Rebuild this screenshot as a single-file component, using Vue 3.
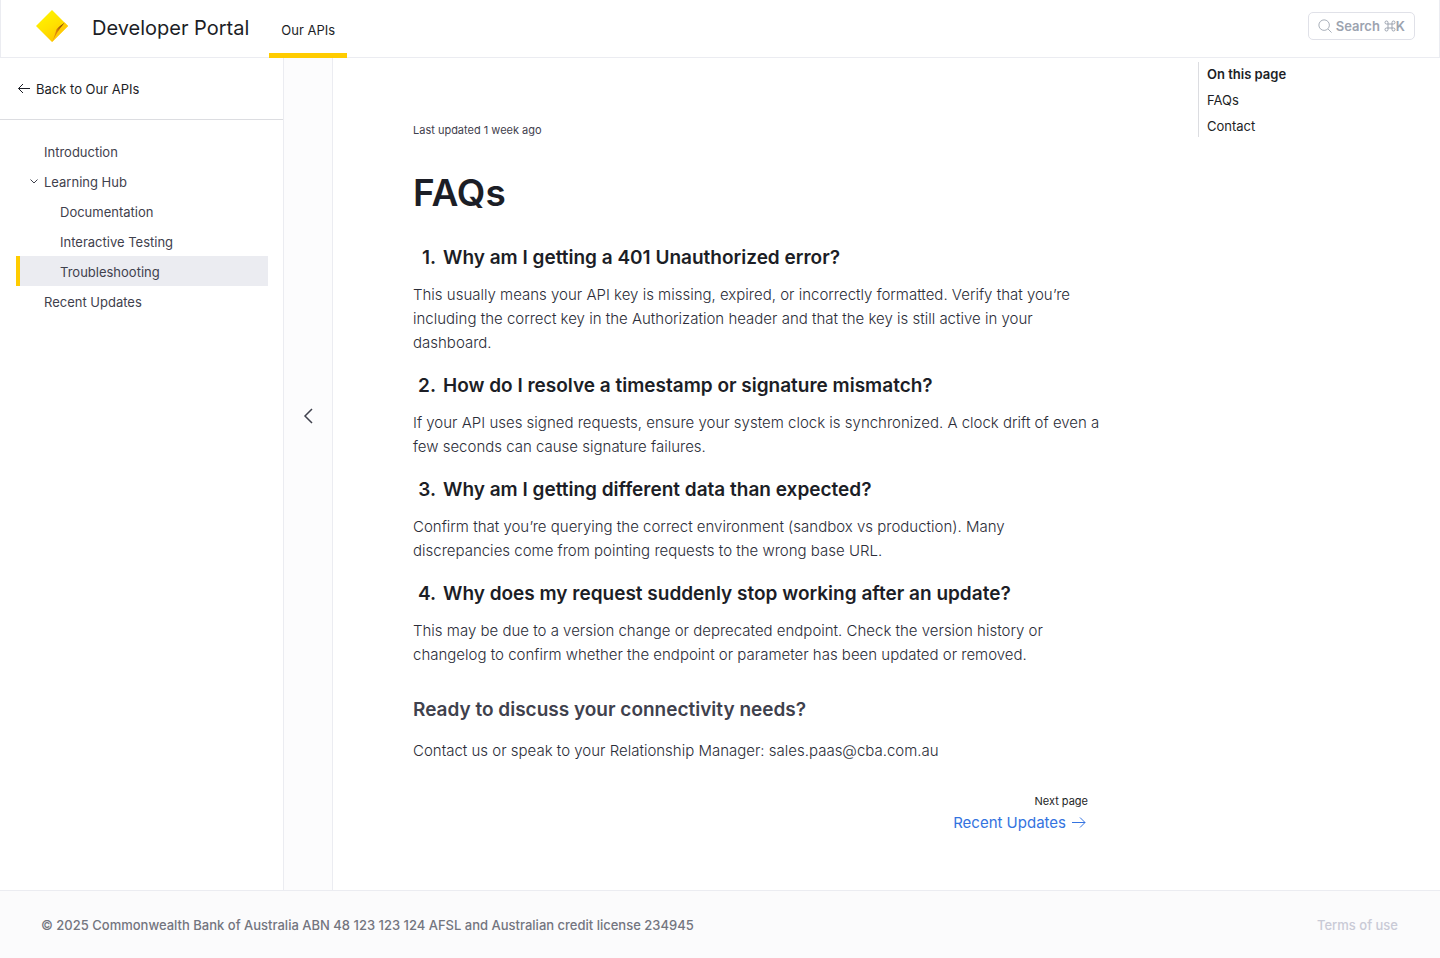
<script setup>
const navItems = [
  { label: 'Introduction', level: 1 },
  { label: 'Learning Hub', level: 1, expanded: true },
  { label: 'Documentation', level: 2 },
  { label: 'Interactive Testing', level: 2 },
  { label: 'Troubleshooting', level: 2, active: true },
  { label: 'Recent Updates', level: 1 },
]

const faqs = [
  {
    question: 'Why am I getting a 401 Unauthorized error?',
    answer:
      'This usually means your API key is missing, expired, or incorrectly formatted. Verify that you’re including the correct key in the Authorization header and that the key is still active in your dashboard.',
  },
  {
    question: 'How do I resolve a timestamp or signature mismatch?',
    answer:
      'If your API uses signed requests, ensure your system clock is synchronized. A clock drift of even a few seconds can cause signature failures.',
  },
  {
    question: 'Why am I getting different data than expected?',
    answer:
      'Confirm that you’re querying the correct environment (sandbox vs production). Many discrepancies come from pointing requests to the wrong base URL.',
  },
  {
    question: 'Why does my request suddenly stop working after an update?',
    answer:
      'This may be due to a version change or deprecated endpoint. Check the version history or changelog to confirm whether the endpoint or parameter has been updated or removed.',
  },
]
</script>

<template>
  <div class="page">
    <header class="topbar">
      <a class="brand" href="#">
        <svg class="logo" viewBox="0 0 32 32" aria-hidden="true">
          <defs>
            <linearGradient id="face" x1="0.2" y1="0.1" x2="0.7" y2="0.9">
              <stop offset="0" stop-color="#fff200" />
              <stop offset="0.5" stop-color="#ffe200" />
              <stop offset="1" stop-color="#ffc800" />
            </linearGradient>
            <linearGradient id="fold" x1="0.8" y1="0" x2="0.2" y2="1">
              <stop offset="0" stop-color="#6e3a08" />
              <stop offset="0.5" stop-color="#d98209" />
              <stop offset="1" stop-color="#e8950a" />
            </linearGradient>
          </defs>
          <path d="M16 0 32 16 16 32 0 16Z" fill="url(#face)" />
          <path d="M28.5 12.5 32 16 16 32 20 20Z" fill="#ffcb05" />
          <path d="M28.5 12.5C26 15 22.500 16.500 20.500 19.500C19.500 23 18 28 16 32L21 23C23 19.500 26 16 28.500 12.500Z" fill="url(#fold)" />
        </svg>
        <span class="brand-name">Developer Portal</span>
      </a>
      <nav class="tabs" aria-label="Main">
        <a class="tab" href="#">Our APIs</a>
      </nav>
      <button class="search" type="button">
        <svg class="search-icon" viewBox="0 0 16 16" aria-hidden="true">
          <circle cx="7" cy="7" r="6" />
          <path d="M11.500 11.500 15.500 15.500" />
        </svg>
        <span>Search</span>
        <svg class="command-icon" viewBox="0 0 12 12" aria-hidden="true">
          <path d="M4 4H8V8H4ZM4 4H2.500A1.500 1.500 0 1 1 4 2.500ZM8 4V2.500A1.500 1.500 0 1 1 9.500 4ZM8 8H9.500A1.500 1.500 0 1 1 8 9.500ZM4 8V9.500A1.500 1.500 0 1 1 2.500 8Z" />
        </svg>
        <span>K</span>
      </button>
    </header>

    <div class="body">
      <aside class="sidebar">
        <a class="back" href="#">
          <svg class="back-icon" viewBox="0 0 12 12" aria-hidden="true">
            <path d="M12 5.500H0.500M5 1 0.500 5.500 5 10" />
          </svg>
          Back to Our APIs
        </a>
        <nav class="nav" aria-label="Documentation">
          <a
            v-for="item in navItems"
            :key="item.label"
            href="#"
            class="nav-item"
            :class="{ nested: item.level === 2, active: item.active }"
            :aria-current="item.active ? 'page' : undefined"
          >
            <span class="nav-toggle">
              <svg v-if="item.expanded" class="chevron" viewBox="0 0 8 8" aria-hidden="true">
                <path d="M0.500 1.500 4 5 7.500 1.500" />
              </svg>
            </span>
            {{ item.label }}
          </a>
        </nav>
      </aside>

      <div class="rail">
        <button class="collapse" type="button" aria-label="Collapse sidebar">
          <svg class="collapse-icon" viewBox="0 0 10 16" aria-hidden="true">
            <path d="M9 1 2 8 9 15" />
          </svg>
        </button>
      </div>

      <main class="content">
        <article class="article">
          <p class="updated">Last updated 1 week ago</p>
          <h1 class="title">FAQs</h1>
          <section v-for="(faq, index) in faqs" :key="faq.question" class="faq">
            <h2 class="question">
              <span class="number">{{ index + 1 }}.</span>{{ faq.question }}
            </h2>
            <p class="text">{{ faq.answer }}</p>
          </section>
          <h2 class="ready">Ready to discuss your connectivity needs?</h2>
          <p class="text">Contact us or speak to your Relationship Manager: sales.paas@cba.com.au</p>
          <div class="next">
            <span class="next-label">Next page</span>
            <a class="next-link" href="#">
              Recent Updates
              <svg class="next-icon" viewBox="0 0 14 12" aria-hidden="true">
                <path d="M0 5.500H13M8 0.500 13 5.500 8 10.500" />
              </svg>
            </a>
          </div>
        </article>
        <nav class="toc" aria-label="On this page">
          <strong class="toc-title">On this page</strong>
          <a class="toc-link" href="#">FAQs</a>
          <a class="toc-link" href="#">Contact</a>
        </nav>
      </main>
    </div>

    <footer class="footer">
      <span>© 2025 Commonwealth Bank of Australia ABN 48 123 123 124 AFSL and Australian credit license 234945</span>
      <a class="terms" href="#">Terms of use</a>
    </footer>
  </div>
</template>

<style>
body {
  margin: 0;
}
</style>

<style scoped>
.page {
  display: flex;
  flex-direction: column;
  min-height: 100vh;
  background: #fff;
  color: #1c1e26;
  font-family: Inter, "Liberation Sans", sans-serif;
  font-size: 13px;
}
.page * {
  box-sizing: border-box;
}
a {
  color: inherit;
  text-decoration: none;
}
svg {
  display: block;
  flex: none;
  fill: none;
  stroke: currentColor;
}
p,
h1,
h2 {
  margin: 0;
}
.topbar {
  display: flex;
  height: 58px;
  padding: 0 24px 0 35px;
  border: 1px solid #ebecf1;
  border-top: 0;
}
.brand {
  display: flex;
  align-items: center;
  gap: 24px;
  padding-bottom: 2px;
}
.logo {
  width: 32px;
  height: 32px;
  margin-bottom: 4px;
  stroke: none;
}
.brand-name {
  font-size: 20px;
  line-height: 28px;
}
.tabs {
  display: flex;
  margin: 0 auto -1px 20px;
}
.tab {
  display: flex;
  align-items: center;
  padding: 7px 12px 0;
  border-bottom: 5px solid #ffcc00;
}
.search {
  display: flex;
  align-items: center;
  height: 28px;
  margin-top: 12px;
  padding: 0 9px;
  border: 1px solid #e0e1e8;
  border-radius: 5px;
  background: #fff;
  color: #9ca3af;
  font: 600 13px/20px Inter, "Liberation Sans", sans-serif;
}
.search-icon {
  width: 14px;
  height: 14px;
  margin-right: 4px;
}
.command-icon {
  width: 12px;
  height: 12px;
  margin-left: 4px;
}
.body {
  display: flex;
  flex: 1;
}
.sidebar {
  flex: none;
  width: 283px;
}
.back {
  display: flex;
  align-items: center;
  gap: 6px;
  height: 62px;
  padding: 0 18px;
  border-bottom: 1px solid #dcdde1;
}
.back-icon {
  width: 12px;
  height: 12px;
  stroke-width: 1;
}
.nav {
  display: flex;
  flex-direction: column;
  padding: 16px 15px 16px 16px;
}
.nav-item {
  display: flex;
  align-items: center;
  height: 30px;
  padding: 2px 0 0 10px;
  border-left: 4px solid transparent;
  color: #3f414d;
}
.nested {
  padding-left: 26px;
}
.active {
  border-left-color: #ffcc00;
  background: #ebecf1;
}
.nav-toggle {
  width: 14px;
}
.chevron {
  width: 8px;
  height: 8px;
}
.rail {
  display: flex;
  flex: none;
  justify-content: center;
  width: 50px;
  border: solid #ebecf1;
  border-width: 0 1px;
  background: #fcfcfd;
}
.collapse {
  display: flex;
  align-items: center;
  width: 100%;
  height: 716px;
  justify-content: center;
  padding: 0;
  border: 0;
  background: transparent;
  color: #3f414d;
}
.collapse-icon {
  width: 10px;
  height: 16px;
  stroke-width: 1.5;
}
.content {
  display: flex;
  flex: 1;
  justify-content: space-between;
  padding: 0 16px 48px 80px;
}
.article {
  width: 675px;
  padding-top: 64px;
  color: #3f414d;
}
.updated {
  font-size: 11px;
  line-height: 16px;
}
.title {
  margin: 31px 0 27px;
  color: #1c1e26;
  font-size: 37px;
  font-weight: 600;
  line-height: 48px;
}
.faq {
  margin-bottom: 17px;
}
.question {
  display: flex;
  margin-bottom: 11px;
  color: #1c1e26;
  font-size: 19px;
  font-weight: 600;
  line-height: 28px;
}
.number {
  width: 30px;
  padding-right: 7px;
  text-align: right;
}
.text {
  margin-right: -14px;
  color: #2b2d38;
  font-size: 15px;
  font-weight: 300;
  line-height: 24px;
}
.ready {
  margin: 29px 0 15px;
  font-size: 19px;
  font-weight: 600;
  line-height: 28px;
}
.next {
  display: flex;
  flex-direction: column;
  align-items: flex-end;
  margin-top: 30px;
}
.next-label {
  color: #1c1e26;
  font-size: 11px;
  line-height: 16px;
}
.next-link {
  display: flex;
  align-items: center;
  gap: 6px;
  padding-right: 2px;
  color: #3473e0;
  font-size: 15px;
  line-height: 28px;
}
.next-icon {
  width: 14px;
  height: 12px;
}
.toc {
  display: flex;
  flex-direction: column;
  align-self: flex-start;
  gap: 4px;
  width: 226px;
  margin-top: 4px;
  padding: 1px 0 0 8px;
  border-left: 1px solid #dcdde1;
  line-height: 22px;
}
.toc-title {
  font-weight: 600;
}
.footer {
  display: flex;
  align-items: center;
  justify-content: space-between;
  height: 68px;
  padding: 0 42px 0 41px;
  border-top: 1px solid #ebecf1;
  background: #fbfbfc;
  color: #73757f;
  font-weight: 500;
}
.terms {
  color: #c9cad6;
}
</style>
